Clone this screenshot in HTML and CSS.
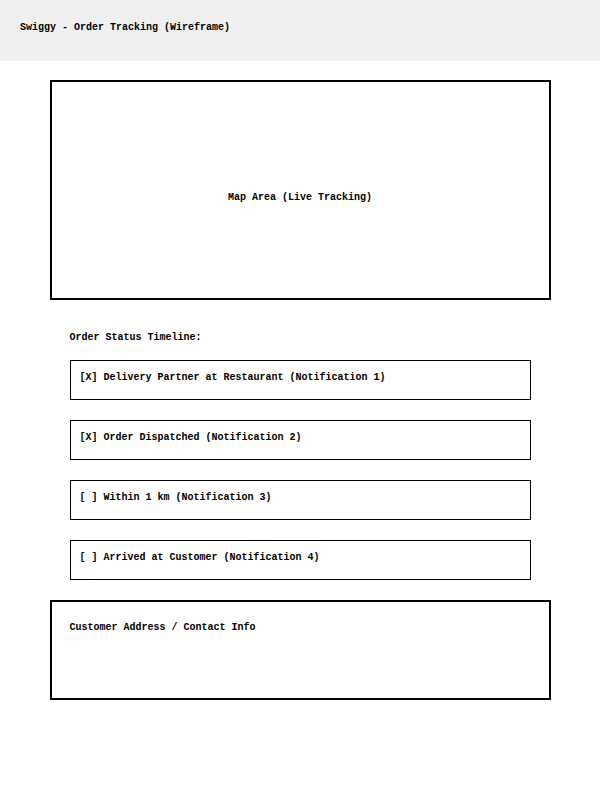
FILE: index.html
```html
<!DOCTYPE html>
<html>
  <head>
    <meta charset="UTF-8">
    <title>Swiggy - Order Tracking (Wireframe)</title>
    <link rel="stylesheet" href="styles.css">
  </head>
  <body>
    <div class="top-bar">Swiggy - Order Tracking (Wireframe)</div>

    <div class="page">
      <!-- Map placeholder -->
      <div class="map-area">Map Area (Live Tracking)</div>

      <!-- Timeline -->
      <div class="timeline">
        <div class="timeline-title">Order Status Timeline:</div>
        <div class="step">[X] Delivery Partner at Restaurant (Notification 1)</div>
        <div class="step">[X] Order Dispatched (Notification 2)</div>
        <div class="step">[ ] Within 1 km (Notification 3)</div>
        <div class="step">[ ] Arrived at Customer (Notification 4)</div>
      </div>

      <!-- Customer info -->
      <div class="customer-box">Customer Address / Contact Info</div>
    </div>
  </body>
</html>
```

FILE: styles.css
```css
body {
  margin: 0;
  background: #fff;
  color: #000;
  font-family: "Liberation Mono", "Courier New", monospace;
  font-size: 10px;
  font-weight: bold;
  line-height: 11px;
}

/* Top bar */
.top-bar {
  background-color: #f0f0f0;
  height: 61px;
  box-sizing: border-box;
  padding: 22px 20px 0;
}

.page {
  width: 501px;
  margin: 0 auto;
}

/* Map placeholder */
.map-area {
  margin-top: 19px;
  height: 220px;
  box-sizing: border-box;
  border: 2px solid #000;
  padding-top: 110px;
  text-align: center;
}

/* Order status timeline */
.timeline {
  padding: 20px 20px 0;
}

.timeline-title {
  margin: 12px 0 17px;
}

.step {
  height: 40px;
  box-sizing: border-box;
  border: 1px solid #000;
  padding: 11px 9px 0;
  margin-bottom: 20px;
}

/* Customer info */
.customer-box {
  height: 100px;
  box-sizing: border-box;
  border: 2px solid #000;
  padding: 20px 18px;
}
```
